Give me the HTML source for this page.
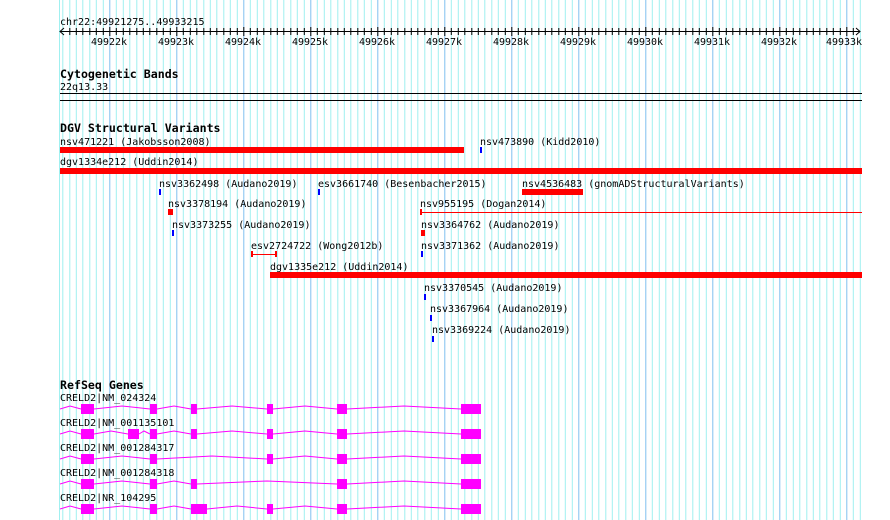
<!DOCTYPE html>
<html><head><meta charset="utf-8"><style>
html,body{margin:0;padding:0;background:#fff;}
svg{display:block;}
text{font-family:"DejaVu Sans Mono","Liberation Mono",monospace;font-size:10px;fill:#000;}
.b{font-weight:bold;font-size:11.6px;}
</style></head><body>
<svg width="890" height="520" viewBox="0 0 890 520" shape-rendering="crispEdges">
<defs>
<pattern id="g" patternUnits="userSpaceOnUse" x="42.3" y="0" width="67" height="520">
<rect x="0" y="0" width="1" height="520" fill="#80c0f0"/>
<rect x="6.7" y="0" width="1" height="520" fill="#a0f0f0"/>
<rect x="13.4" y="0" width="1" height="520" fill="#a0f0f0"/>
<rect x="20.1" y="0" width="1" height="520" fill="#a0f0f0"/>
<rect x="26.8" y="0" width="1" height="520" fill="#a0f0f0"/>
<rect x="33.5" y="0" width="1" height="520" fill="#a0f0f0"/>
<rect x="40.2" y="0" width="1" height="520" fill="#a0f0f0"/>
<rect x="46.9" y="0" width="1" height="520" fill="#a0f0f0"/>
<rect x="53.6" y="0" width="1" height="520" fill="#a0f0f0"/>
<rect x="60.3" y="0" width="1" height="520" fill="#a0f0f0"/>
</pattern>
<pattern id="t" patternUnits="userSpaceOnUse" x="42.3" y="27" width="67" height="9">
<rect x="0" y="0" width="1" height="9" fill="#000"/>
<rect x="6.7" y="1" width="1" height="7" fill="#000"/>
<rect x="13.4" y="1" width="1" height="7" fill="#000"/>
<rect x="20.1" y="1" width="1" height="7" fill="#000"/>
<rect x="26.8" y="1" width="1" height="7" fill="#000"/>
<rect x="33.5" y="1" width="1" height="7" fill="#000"/>
<rect x="40.2" y="1" width="1" height="7" fill="#000"/>
<rect x="46.9" y="1" width="1" height="7" fill="#000"/>
<rect x="53.6" y="1" width="1" height="7" fill="#000"/>
<rect x="60.3" y="1" width="1" height="7" fill="#000"/>
</pattern>
</defs>
<rect x="59" y="0" width="803" height="520" fill="url(#g)"/>
<rect x="59" y="0" width="1" height="520" fill="#a0f0f0"/>
<text x="60" y="25">chr22:49921275..49933215</text>
<rect x="60" y="31" width="800" height="1" fill="#000"/>
<rect x="64" y="27" width="793" height="9" fill="url(#t)"/>
<path d="M64 28 L60 31.5 L64 35 M856 28 L860 31.5 L856 35" stroke="#000" fill="none" shape-rendering="auto"/>
<g text-anchor="middle">
<text x="109" y="45">49922k</text><text x="176" y="45">49923k</text><text x="243" y="45">49924k</text>
<text x="310" y="45">49925k</text><text x="377" y="45">49926k</text><text x="444" y="45">49927k</text>
<text x="511" y="45">49928k</text><text x="578" y="45">49929k</text><text x="645" y="45">49930k</text>
<text x="712" y="45">49931k</text><text x="779" y="45">49932k</text><text x="844" y="45">49933k</text>
</g>
<text class="b" x="60" y="78">Cytogenetic Bands</text>
<text x="60" y="90">22q13.33</text>
<rect x="60" y="93" width="802" height="1" fill="#000"/>
<rect x="60" y="100" width="802" height="1" fill="#000"/>
<text class="b" x="60" y="132">DGV Structural Variants</text>
<text x="60" y="145">nsv471221 (Jakobsson2008)</text>
<rect x="60" y="147" width="404" height="6" fill="#f00"/>
<text x="480" y="145">nsv473890 (Kidd2010)</text>
<rect x="480" y="147" width="2" height="6" fill="#00f"/>
<text x="60" y="165">dgv1334e212 (Uddin2014)</text>
<rect x="60" y="168" width="802" height="6" fill="#f00"/>
<text x="159" y="187">nsv3362498 (Audano2019)</text>
<rect x="159" y="189" width="2" height="6" fill="#00f"/>
<text x="318" y="187">esv3661740 (Besenbacher2015)</text>
<rect x="318" y="189" width="2" height="6" fill="#00f"/>
<text x="522" y="187">nsv4536483 (gnomADStructuralVariants)</text>
<rect x="522" y="189" width="61" height="6" fill="#f00"/>
<text x="168" y="207">nsv3378194 (Audano2019)</text>
<rect x="168" y="209" width="5" height="6" fill="#f00"/>
<text x="420" y="207">nsv955195 (Dogan2014)</text>
<rect x="420" y="209" width="2" height="6" fill="#f00"/>
<rect x="420" y="212" width="442" height="1" fill="#f00"/>
<text x="172" y="228">nsv3373255 (Audano2019)</text>
<rect x="172" y="230" width="2" height="6" fill="#00f"/>
<text x="421" y="228">nsv3364762 (Audano2019)</text>
<rect x="421" y="230" width="4" height="6" fill="#f00"/>
<text x="251" y="249">esv2724722 (Wong2012b)</text>
<rect x="251" y="251" width="2" height="6" fill="#f00"/>
<rect x="275" y="251" width="2" height="6" fill="#f00"/>
<rect x="251" y="254" width="26" height="1" fill="#f00"/>
<text x="421" y="249">nsv3371362 (Audano2019)</text>
<rect x="421" y="251" width="2" height="6" fill="#00f"/>
<text x="270" y="270">dgv1335e212 (Uddin2014)</text>
<rect x="270" y="272" width="592" height="6" fill="#f00"/>
<text x="424" y="291">nsv3370545 (Audano2019)</text>
<rect x="424" y="294" width="2" height="6" fill="#00f"/>
<text x="430" y="312">nsv3367964 (Audano2019)</text>
<rect x="430" y="315" width="2" height="6" fill="#00f"/>
<text x="432" y="333">nsv3369224 (Audano2019)</text>
<rect x="432" y="336" width="2" height="6" fill="#00f"/>
<text class="b" x="60" y="389">RefSeq Genes</text>
<g stroke="#f0f" fill="none" shape-rendering="auto">
<path d="M60 409 L70 406 L81 409 M94 409 L122 406 L150 409 M157 409 L174 406 L191 409 M197 409 L232 406 L267 409 M273 409 L305 406 L337 409 M347 409 L404 406 L461 409"/>
<path d="M60 434 L70 431 L81 434 M94 434 L111 431 L128 434 M139 434 L144 431 L150 434 M157 434 L174 431 L191 434 M197 434 L232 431 L267 434 M273 434 L305 431 L337 434 M347 434 L404 431 L461 434"/>
<path d="M60 459 L70 456 L81 459 M94 459 L122 456 L150 459 M157 459 L212 456 L267 459 M273 459 L305 456 L337 459 M347 459 L404 456 L461 459"/>
<path d="M60 484 L70 481 L81 484 M94 484 L122 481 L150 484 M157 484 L174 481 L191 484 M197 484 L267 481 L337 484 M347 484 L404 481 L461 484"/>
<path d="M60 509 L70 506 L81 509 M94 509 L122 506 L150 509 M157 509 L174 506 L191 509 M207 509 L237 506 L267 509 M273 509 L305 506 L337 509 M347 509 L404 506 L461 509"/>
</g>
<g fill="#f0f">
<rect x="81" y="404" width="13" height="10"/><rect x="150" y="404" width="7" height="10"/><rect x="191" y="404" width="6" height="10"/><rect x="267" y="404" width="6" height="10"/><rect x="337" y="404" width="10" height="10"/><rect x="461" y="404" width="20" height="10"/>
<rect x="81" y="429" width="13" height="10"/><rect x="128" y="429" width="11" height="10"/><rect x="150" y="429" width="7" height="10"/><rect x="191" y="429" width="6" height="10"/><rect x="267" y="429" width="6" height="10"/><rect x="337" y="429" width="10" height="10"/><rect x="461" y="429" width="20" height="10"/>
<rect x="81" y="454" width="13" height="10"/><rect x="150" y="454" width="7" height="10"/><rect x="267" y="454" width="6" height="10"/><rect x="337" y="454" width="10" height="10"/><rect x="461" y="454" width="20" height="10"/>
<rect x="81" y="479" width="13" height="10"/><rect x="150" y="479" width="7" height="10"/><rect x="191" y="479" width="6" height="10"/><rect x="337" y="479" width="10" height="10"/><rect x="461" y="479" width="20" height="10"/>
<rect x="81" y="504" width="13" height="10"/><rect x="150" y="504" width="7" height="10"/><rect x="191" y="504" width="16" height="10"/><rect x="267" y="504" width="6" height="10"/><rect x="337" y="504" width="10" height="10"/><rect x="461" y="504" width="20" height="10"/>
</g>
<text x="60" y="401">CRELD2|NM_024324</text>
<text x="60" y="426">CRELD2|NM_001135101</text>
<text x="60" y="451">CRELD2|NM_001284317</text>
<text x="60" y="476">CRELD2|NM_001284318</text>
<text x="60" y="501">CRELD2|NR_104295</text>
</svg>
</body></html>
